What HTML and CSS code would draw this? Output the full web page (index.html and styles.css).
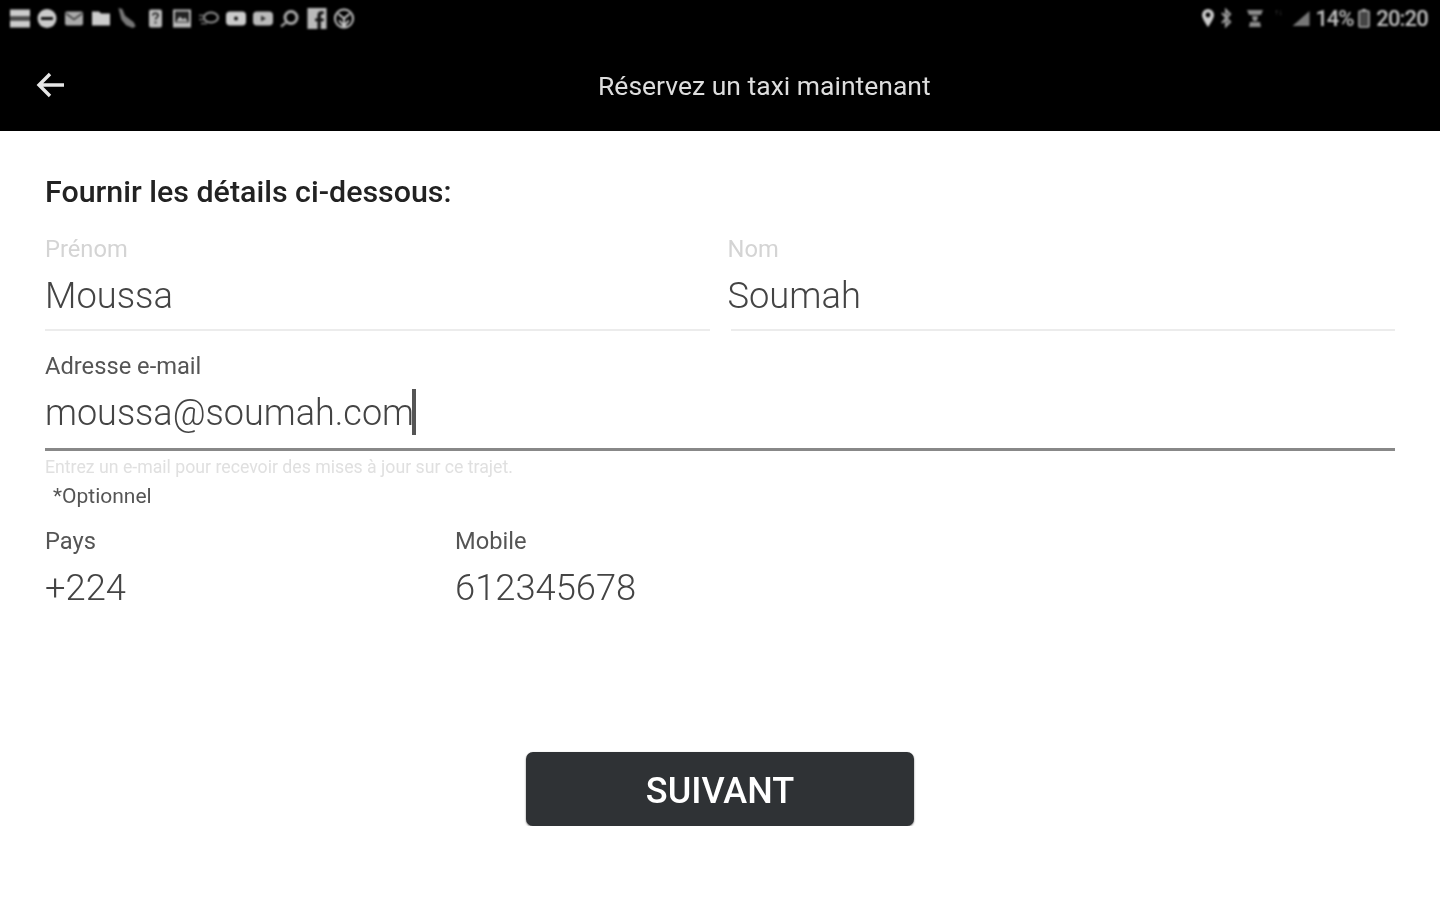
FILE: index.html
```html
<!DOCTYPE html>
<html lang="fr">
<head>
    <meta charset="UTF-8">
    <meta name="viewport" content="width=device-width, initial-scale=1.0">
    <title>Réservez un taxi maintenant</title>
    <link rel="stylesheet" href="styles.css">
</head>
<body>

    <header class="topbar">
        <div class="status">
            <div class="status-left">
                <svg class="ic" viewBox="0 0 22 20"><path d="M1 1h20v7H1zM1 12h20v7H1z" fill="#ccc"/><path d="M1 9h20v2H1z" fill="#666"/></svg>
                <svg class="ic" viewBox="0 0 22 20"><circle cx="11" cy="10" r="9.500" fill="#ccc"/><rect x="5" y="8.500" width="12" height="3" fill="#111"/></svg>
                <svg class="ic" viewBox="0 0 22 20"><rect x="2" y="3" width="18" height="14" rx="2" fill="#aaa"/><path d="M3 5l8 6 8-6" fill="none" stroke="#444" stroke-width="1.600"/></svg>
                <svg class="ic" viewBox="0 0 22 20"><path d="M2 3h7l2 2h9v12H2z" fill="#ccc"/></svg>
                <svg class="ic" viewBox="0 0 22 22"><path d="M1 0l4 1 3 7 9 7 2 4-3 2-7-3-5-6z" fill="#777"/></svg>
                <svg class="ic" viewBox="0 0 22 20"><rect x="5" y="1" width="13" height="18" rx="2" fill="#bbb"/><path d="M9 7c0-3 5-3 5 0 0 2-2.500 2-2.500 4M11.500 13v2" fill="none" stroke="#111" stroke-width="1.600"/></svg>
                <svg class="ic" viewBox="0 0 22 20"><rect x="2" y="1" width="18" height="18" fill="#bbb"/><rect x="4" y="3" width="14" height="11" fill="#222"/><path d="M5 13l4-5 3 3 2-2 3 4z" fill="#bbb"/></svg>
                <svg class="ic" viewBox="0 0 22 20"><ellipse cx="13" cy="9" rx="7" ry="5" fill="none" stroke="#999" stroke-width="2"/><path d="M1 7h6M1 11h6M3 15h6" stroke="#777" stroke-width="1.500"/></svg>
                <svg class="ic" viewBox="0 0 22 20"><rect x="1" y="3" width="20" height="14" rx="4" fill="#ccc"/><circle cx="11" cy="10" r="2" fill="#111"/></svg>
                <svg class="ic" viewBox="0 0 22 20"><rect x="1" y="3" width="20" height="14" rx="4" fill="#bbb"/><path d="M9 7l5 3-5 3z" fill="#333"/></svg>
                <svg class="ic" viewBox="0 0 22 20"><circle cx="12" cy="9" r="6" fill="none" stroke="#aaa" stroke-width="3"/><path d="M7 14l-5 4" stroke="#999" stroke-width="2.500"/></svg>
                <svg class="ic" viewBox="0 0 22 22"><rect x="1" y="0" width="20" height="22" fill="#bbb"/><path d="M15 22v-8h3v-3h-3V8c0-1 .5-1.500 1.500-1.500H18V3.500h-2.500C13 3.500 11.500 5 11.500 8v3H9v3h2.500v8z" fill="#111"/></svg>
                <svg class="ic" viewBox="0 0 22 22"><circle cx="11" cy="11" r="9.500" fill="none" stroke="#ccc" stroke-width="2"/><path d="M5 6l6 5 6-5M11 11v8M6 13l5 6 5-6" fill="none" stroke="#ccc" stroke-width="2"/></svg>
            </div>
            <div class="status-right">
                <svg class="ic-sm pin" viewBox="0 0 14 20"><path d="M7 1a6 6 0 0 0-6 6c0 4 6 12 6 12s6-8 6-12a6 6 0 0 0-6-6z" fill="#ccc"/><circle cx="7" cy="7" r="2.400" fill="#000"/></svg>
                <svg class="ic-sm bt" viewBox="0 0 12 20"><path d="M2 5l8 9-4 4V2l4 4-8 9" fill="none" stroke="#999" stroke-width="2.200"/></svg>
                <svg class="ic-sm hotspot" viewBox="0 0 18 20"><path d="M1 2h16l-2 5H3zM6 8h6l-1 5H7zM4 14h10l1 5H3z" fill="#8a8a8a"/></svg>
                <span class="tiny">↑↓</span>
                <svg class="ic-sm signal" viewBox="0 0 18 16"><path d="M1 15L17 1v14z" fill="#777"/></svg>
                <span class="pct">14%</span>
                <svg class="ic-sm batt" viewBox="0 0 12 20"><rect x="1" y="3" width="10" height="16" rx="1" fill="#444" stroke="#aaa" stroke-width="1.600"/><rect x="4" y="1" width="4" height="2" fill="#aaa"/></svg>
                <span class="time">20:20</span>
            </div>
        </div>
        <div class="toolbar">
            <svg class="back" viewBox="0 0 30 28"><path d="M28 14H4M14 3L3 14l11 11" fill="none" stroke="#e6e6e6" stroke-width="3.400"/></svg>
            <h1>Réservez un taxi maintenant</h1>
        </div>
    </header>

    <main class="form">
        <h2>Fournir les détails ci-dessous:</h2>

        <div class="row">
            <div class="field">
                <label class="faint">Prénom</label>
                <div class="value">Moussa</div>
            </div>
            <div class="field">
                <label class="faint">Nom</label>
                <div class="value">Soumah</div>
            </div>
        </div>

        <div class="field focus">
            <label>Adresse e-mail</label>
            <div class="value">moussa@soumah.com<span class="caret"></span></div>
        </div>
        <p class="hint">Entrez un e-mail pour recevoir des mises à jour sur ce trajet.</p>
        <p class="optional">*Optionnel</p>

        <div class="phone">
            <div class="plain pays">
                <label>Pays</label>
                <div class="value">+224</div>
            </div>
            <div class="plain">
                <label>Mobile</label>
                <div class="value">612345678</div>
            </div>
        </div>

        <div class="actions">
            <button>SUIVANT</button>
        </div>
    </main>

</body>
</html>
```

FILE: styles.css
```css
body {
    margin: 0;
    background: white;
    font-family: Roboto, "Liberation Sans", sans-serif;
    color: #444;
}

/* Top bar */
.topbar {
    background: black;
    height: 131px;
}
.status {
    height: 36px;
    display: flex;
    justify-content: space-between;
    align-items: center;
    padding: 0 12px 0 9px;
    filter: blur(0.9px);
}
.status-left {
    display: flex;
    align-items: center;
    gap: 5px;
}
.ic {
    width: 22px;
    height: 21px;
}
.status-right {
    display: flex;
    align-items: center;
    color: #c4c4c4;
    font-size: 22px;
    font-weight: 500;
}
.ic-sm {
    height: 20px;
}
.pin { width: 14px; margin-right: 5px; }
.bt { width: 12px; margin-right: 14px; }
.hotspot { width: 18px; }
.tiny { font-size: 8px; color: #555; margin: 0 8px 12px 11px; }
.signal { width: 20px; height: 17px; margin-right: 5px; }
.pct { letter-spacing: -1.200px; }
.batt { width: 14px; margin: 0 5px 0 4px; }
.time { letter-spacing: -0.8px; }

.toolbar {
    height: 89px;
    padding: 4px 0 0 36px;
    display: flex;
    align-items: center;
    filter: blur(0.6px);
}
.back {
    width: 30px;
    height: 28px;
}
.toolbar h1 {
    margin: 2px 0 0 532px;
    font-size: 26.500px;
    font-weight: 400;
    color: #ddd;
}

/* Form */
.form {
    padding: 44px 45px 0;
    filter: blur(0.7px);
}
h2 {
    margin: 0;
    font-size: 30.400px;
    line-height: 34px;
    font-weight: 500;
    color: #222;
}
.row {
    display: flex;
    gap: 21px;
    margin-top: 27px;
}
.row .field {
    flex: 1;
}
.row .field + .field label,
.row .field + .field .value {
    margin-left: -3px;
}
.field {
    border-bottom: 2px solid #ececec;
    height: 93px;
}
label {
    display: block;
    font-size: 23.700px;
    line-height: 26px;
    color: #555;
}
label.faint {
    color: #d4d4d4;
}
.value {
    font-size: 36.300px;
    line-height: 44px;
    margin-top: 12px;
    font-weight: 300;
    color: #444;
}
.focus {
    margin-top: 22px;
    height: 95px;
    border-bottom: 3px solid #888;
}
.focus .value {
    font-size: 36px;
}
.caret {
    display: inline-block;
    width: 4px;
    height: 46px;
    margin: -8px 0 -8px -2px;
    background: #555;
    vertical-align: -2px;
}
.hint {
    margin: 4px 0 0;
    font-size: 17.700px;
    line-height: 24px;
    color: #e0e0e0;
}
.optional {
    margin: 4px 0 0 8px;
    font-size: 21px;
    line-height: 26px;
    color: #555;
}
.phone {
    display: flex;
    margin-top: 19px;
}
.phone .value {
    margin-top: 12px;
}
.pays {
    width: 410px;
}
.actions {
    margin-top: 142px;
    display: flex;
    justify-content: center;
}
button {
    width: 388px;
    height: 74px;
    padding-top: 4px;
    background: #2f3235;
    border: none;
    border-radius: 7px;
    box-shadow: 0 1px 2px #777;
    color: white;
    font-family: Roboto, "Liberation Sans", sans-serif;
    font-size: 36px;
    font-weight: 500;
}
```
